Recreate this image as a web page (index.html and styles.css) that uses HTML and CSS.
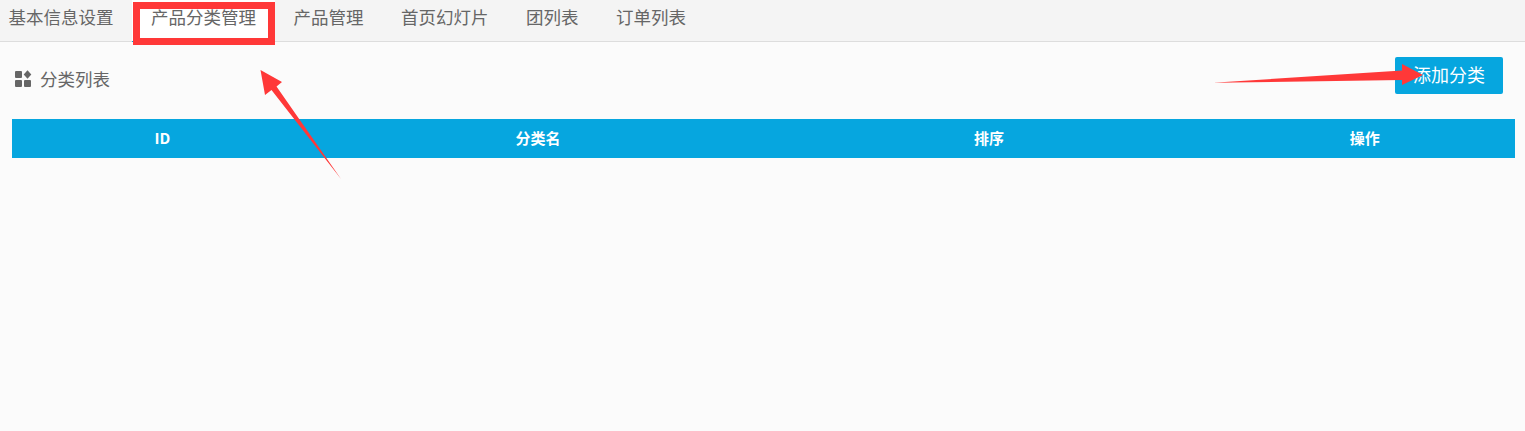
FILE: index.html
```html
<!DOCTYPE html>
<html lang="zh-CN">
<head>
<meta charset="utf-8">
<title>产品分类管理</title>
<link rel="stylesheet" href="styles.css">
</head>
<body>
<nav class="tabs">
  <a class="tab tab-first">基本信息设置</a>
  <a class="tab tab-active">产品分类管理</a>
  <a class="tab">产品管理</a>
  <a class="tab">首页幻灯片</a>
  <a class="tab">团列表</a>
  <a class="tab">订单列表</a>
</nav>
<main class="content">
  <div class="toolbar">
    <div class="title">
      <svg class="title-icon" width="18" height="18" viewBox="0 0 18 18"><rect x="1" y="2" width="7" height="7" rx="1"/><rect x="1" y="11" width="7" height="7" rx="1"/><rect x="10" y="11" width="7" height="7" rx="1"/><path d="M13.5 1.2 17.3 5.5 13.5 9.8 9.7 5.5Z"/></svg>
      <span>分类列表</span>
    </div>
    <button class="btn-add">添加分类</button>
  </div>
  <table class="list">
    <thead>
      <tr>
        <th class="col-s">ID</th>
        <th class="col-l">分类名</th>
        <th class="col-l">排序</th>
        <th class="col-s">操作</th>
      </tr>
    </thead>
  </table>
</main>
<svg class="annotations" width="1525" height="431" viewBox="0 0 1525 431">
  <rect class="frame" x="136.5" y="5.5" width="135" height="36"/>
  <path class="arrow" d="M260.5 70 282 82 276.5 86.5 341 179 271.5 90 265 95Z"/>
  <path class="arrow" d="M1423 75 1402 64 1402 70.5 1213 82.8 1402 80 1402 85Z"/>
</svg>
</body>
</html>
```
FILE: styles.css
```css
* { box-sizing: border-box; }
html, body { margin: 0; padding: 0; }
body {
  width: 1525px;
  height: 431px;
  overflow: hidden;
  position: relative;
  background: #fbfbfb;
  font-family: "Noto Sans CJK SC", "Liberation Sans", sans-serif;
  color: #666;
}
.tabs {
  display: flex;
  height: 42px;
  background: #f4f4f4;
  border-bottom: 1px solid #ddd;
}
.tab {
  display: block;
  height: 42px;
  padding: 0 18.75px;
  font-size: 17.5px;
  line-height: 34px;
  color: #666;
}
.tab-first { padding-left: 8.5px; }
.tab-active { background: #fff; border-bottom: 1px solid #06a6df; }
.content { padding: 15px 10px 0 12px; }
.toolbar {
  display: flex;
  justify-content: space-between;
  align-items: flex-start;
  width: 1491px;
  height: 62px;
}
.title {
  display: flex;
  align-items: center;
  gap: 8px;
  height: 42px;
  font-size: 17.5px;
  color: #666;
}
.title-icon { fill: #666; margin-left: 2px; }
.btn-add {
  width: 108px;
  height: 37px;
  border: 0;
  border-radius: 2px;
  background: #06a6df;
  color: #fff;
  font-family: inherit;
  font-size: 18px;
  padding: 0 0 4px;
}
.list {
  width: 1503px;
  border-collapse: collapse;
  table-layout: fixed;
}
.list th {
  height: 39px;
  padding: 0 0 2px;
  background: #06a6df;
  color: #fff;
  font-size: 15px;
  font-weight: 700;
  text-align: center;
}
.col-s { width: 20%; }
.col-l { width: 30%; }
.annotations { position: absolute; left: 0; top: 0; pointer-events: none; }
.frame { fill: none; stroke: #ff3838; stroke-width: 7; }
.arrow { fill: #ff3838; }
```
